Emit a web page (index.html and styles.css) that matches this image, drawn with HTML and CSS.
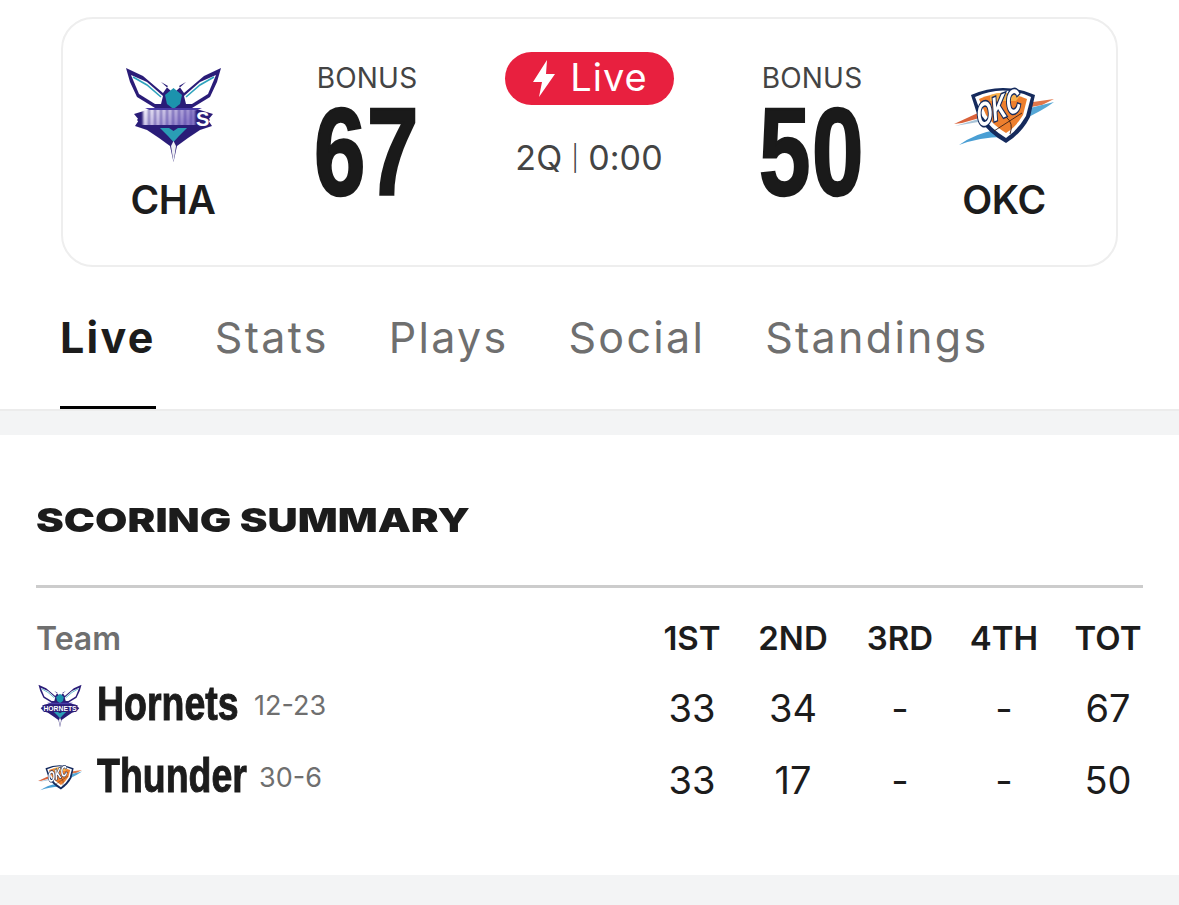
FILE: index.html
```html
<!DOCTYPE html>
<html lang="en">
<head>
<meta charset="utf-8">
<title>CHA vs OKC</title>
<link rel="stylesheet" href="styles.css">
</head>
<body>
<svg class="defs" width="0" height="0" aria-hidden="true">
  <defs>
    <filter id="soft"><feGaussianBlur stdDeviation="0.35"/></filter>
    <filter id="smear"><feGaussianBlur stdDeviation="1.1 0.7"/></filter>
    <linearGradient id="smear-fill" x1="0" y1="0" x2="1" y2="0.4">
      <stop offset="0" stop-color="#f4f1fb"/>
      <stop offset="1" stop-color="#8d7cc9"/>
    </linearGradient>
    <symbol id="hornets" viewBox="0 0 97 94">
      <g filter="url(#soft)">
        <path d="M48.5 94 L45 78 L34 70 L22 62 L10 58 L14 52 L9 46 L22 42 L30 40 L12 29 L5 14 L1 0 L18 8 L38 25 L43 18 L36 14 L46 23 L51 23 L61 14 L54 18 L59 25 L79 8 L96 0 L92 14 L85 29 L67 40 L75 42 L88 46 L83 52 L87 58 L75 62 L63 70 L52 78 Z" fill="#2b1d78"/>
        <path d="M6 7 L22 14 L38 28 L36 36 L30 36 L14 26 Z" fill="#fff"/>
        <path d="M91 7 L75 14 L59 28 L61 36 L67 36 L83 26 Z" fill="#fff"/>
        <path d="M8 9 L22 17 L36 29 M89 9 L75 17 L61 29" stroke="#2fa3bd" stroke-width="1.6" fill="none"/>
        <path d="M40 27 L48.5 20 L57 27 L55 36 L48.5 41 L42 36 Z" fill="#1e93ad"/>
        <path d="M35 60 L44 60 L48.5 63 L53 60 L62 60 L54 68 L48.5 74 L43 68 Z" fill="#2a9db5"/>
        <path d="M48.5 94 L46 78 L48.5 73 L51 78 Z" fill="#eef0f4"/>
        <path d="M20 40 L77 40 L70 43 L27 43 Z" fill="#4a3aa6"/>
      </g>
    </symbol>
    <symbol id="thunder" viewBox="0 0 100 60">
      <g filter="url(#soft)">
        <path d="M0 37 L26 25 L29 30 L8 36 Z" fill="#d9623a"/>
        <path d="M1 39 L28 31 L30 34 Z" fill="#a9c4d8"/>
        <path d="M5 58 Q22 46 42 43 L49 50 Q26 50 5 58 Z" fill="#4a9fd4"/>
        <path d="M72 16 L100 12 L88 18 L72 21 Z" fill="#e0764a"/>
        <path d="M72 22 L100 15 Q88 24 68 33 Z" fill="#56a7d6"/>
        <path d="M17 8 Q49 -6 81 8 L76 30 Q68 46 52 56 Q34 46 24 30 Z" fill="#12295c"/>
        <path d="M21 10 Q49 -3 77 10 L72 29 Q64 43 52 51 Q37 42 28 29 Z" fill="#fff"/>
        <path d="M25 12 Q49 1 73 12 L69 28 Q62 40 52 46 Q40 39 32 28 Z" fill="#ee7f2d"/>
        <path d="M36 8 Q50 3 66 9 L62 14 L36 14 Z" fill="#f6b04c"/>
        <path d="M40 44 L68 26 M52 30 Q60 36 56 47" stroke="#3a1f1a" stroke-width="0.9" fill="none"/>
        <text class="okc-text" transform="translate(25 41) rotate(-23) skewX(-12) scale(.66 1)">OKC</text>
      </g>
    </symbol>
  </defs>
</svg>

<main class="page">
  <section class="scoreboard">
    <div class="team">
      <div class="team-logo">
        <svg class="logo-hornets" viewBox="0 0 97 94">
          <use href="#hornets"/>
          <path class="band-base" d="M12 52 L18 44 L79 44 L85 52 L79 59 L18 59 Z"/>
          <g filter="url(#smear)">
            <rect class="smear-light" x="18" y="42" width="52" height="15"/>
            <path class="smear-dark" d="M24 42v15M30 42v15M36 42v15M42 42v15M48 42v15M54 42v15M60 42v15M66 42v15"/>
          </g>
          <text x="71" y="58" class="big-s">S</text>
        </svg>
      </div>
      <div class="team-abbr">CHA</div>
    </div>
    <div class="score-col">
      <div class="bonus">BONUS</div>
      <div class="score"><span>67</span></div>
    </div>
    <div class="status">
      <div class="live-pill">
        <svg class="bolt" viewBox="0 0 24 37"><path d="M15 0 L1 22 L10 22 L7 37 L23 14 L14 14 Z" fill="#fff"/></svg>
        <span>Live</span>
      </div>
      <div class="clock">2Q <span class="sep">|</span> 0:00</div>
    </div>
    <div class="score-col">
      <div class="bonus">BONUS</div>
      <div class="score"><span>50</span></div>
    </div>
    <div class="team">
      <div class="team-logo">
        <svg class="logo-thunder" viewBox="0 0 100 60"><use href="#thunder"/></svg>
      </div>
      <div class="team-abbr">OKC</div>
    </div>
  </section>

  <nav class="tabs">
    <a class="tab tab-active">Live</a>
    <a class="tab">Stats</a>
    <a class="tab">Plays</a>
    <a class="tab">Social</a>
    <a class="tab">Standings</a>
  </nav>
  <div class="band"></div>

  <section class="summary">
    <h2 class="summary-title"><span>SCORING SUMMARY</span></h2>
    <div class="row head">
      <div class="team-label">Team</div>
      <div class="num">1ST</div><div class="num">2ND</div><div class="num">3RD</div><div class="num">4TH</div><div class="num">TOT</div>
    </div>
    <div class="row team-row">
      <div class="cell-team">
        <svg class="mini-logo" viewBox="0 0 97 94"><use href="#hornets"/><path class="band-base" d="M6 52 L14 44 L83 44 L91 52 L83 60 L14 60 Z"/><text x="48.5" y="57" class="mini-text">HORNETS</text></svg>
        <span class="team-name name-hornets"><span>Hornets</span></span>
        <span class="record">12-23</span>
      </div>
      <div class="num">33</div><div class="num">34</div><div class="num">-</div><div class="num">-</div><div class="num">67</div>
    </div>
    <div class="row team-row">
      <div class="cell-team">
        <svg class="mini-logo" viewBox="0 0 100 60"><use href="#thunder"/></svg>
        <span class="team-name name-thunder"><span>Thunder</span></span>
        <span class="record">30-6</span>
      </div>
      <div class="num">33</div><div class="num">17</div><div class="num">-</div><div class="num">-</div><div class="num">50</div>
    </div>
  </section>
  <div class="footer-band"></div>
</main>
</body>
</html>
```
FILE: styles.css
```css
* { box-sizing: border-box; }
html, body { margin: 0; padding: 0; background: #fff; }
body { font-family: "Inter", "Liberation Sans", sans-serif; color: #1c1c1c; height: 905px; overflow: hidden; }
.defs { display: block; height: 0; }
.page { display: flex; flex-direction: column; height: 905px; }

.scoreboard {
  margin: 17px 61px 0;
  height: 250px;
  border: 2px solid #eeeeee;
  border-radius: 32px;
  display: grid;
  grid-template-columns: 220px 168px 276px 170px 214px;
}
.team { display: flex; flex-direction: column; align-items: center; padding-top: 49px; }
.team-logo { width: 100px; height: 94px; display: flex; justify-content: center; align-items: center; }
.logo-hornets { width: 97px; height: 94px; }
.logo-thunder { width: 100px; height: 60px; margin-top: 4px; }
.band-base { fill: #2b1d78; }
.smear-light { fill: url(#smear-fill); }
.smear-dark { stroke: #5a47ad; stroke-width: 2; fill: none; }
.big-s { font: 700 20px "Liberation Sans Narrow", "Liberation Sans", sans-serif; fill: #fff; }
.okc-text { font: italic 700 32px "Liberation Sans", sans-serif; fill: #fff; stroke: #12295c; stroke-width: 3px; paint-order: stroke; }
.team-abbr { font-size: 39px; line-height: 46px; font-weight: 600; margin-top: 15px; letter-spacing: -.4px; }

.score-col { display: flex; flex-direction: column; align-items: center; padding-top: 42px; }
.bonus { font-size: 28px; line-height: 34px; color: #444; letter-spacing: .2px; }
.score { font-family: "Liberation Sans Narrow", "Liberation Sans", sans-serif; font-weight: 700; color: #1a1a1a; font-size: 124px; line-height: 96px; margin-top: 9px; }
.score span { display: inline-block; transform: scaleX(.745); letter-spacing: 2px; -webkit-text-stroke: 2.5px #1a1a1a; }

.status { display: flex; flex-direction: column; align-items: center; padding-top: 33px; }
.live-pill { width: 169px; height: 53px; border-radius: 27px; background: #e8203f; color: #fff; display: flex; align-items: center; justify-content: center; gap: 14px; font-size: 38px; letter-spacing: 1px; padding: 0 0 3px 2px; }
.bolt { width: 24px; height: 37px; margin-top: 3px; }
.clock { margin-top: 31px; font-size: 34px; line-height: 44px; color: #444; letter-spacing: .1px; display: flex; align-items: center; gap: 9px; }
.sep { font-size: 25px; font-weight: 300; line-height: 44px; }

.tabs { height: 142px; padding: 0 60px; display: flex; gap: 60px; }
.tab { font-size: 43px; line-height: 50px; padding-top: 45px; color: #6f6f6f; letter-spacing: 2.3px; height: 142px; }
.tab-active { color: #1c1c1c; font-weight: 700; border-bottom: 3px solid #000; margin-right: -1px; }

.band { height: 26px; background: #f3f4f5; border-top: 2px solid #ececec; }

.summary { flex: 1; padding: 0 36px; }
.summary-title { margin: 65px 0 0; font-weight: 900; font-size: 33px; line-height: 40px; height: 88px; border-bottom: 3px solid #cccccc; }
.summary-title span { display: inline-block; transform: scaleX(1.267); transform-origin: left center; white-space: nowrap; }
.row { display: grid; grid-template-columns: 1fr 92px 110px 104px 104px 104px; align-items: center; text-align: center; margin-right: -17px; }
.head { height: 68px; margin-top: 16px; font-size: 33px; font-weight: 600; }
.team-label { color: #6f6f6f; text-align: left; font-size: 32px; }
.team-row { height: 72px; font-size: 38px; }
.cell-team { display: flex; align-items: center; margin-top: -5px; }
.mini-logo { width: 44px; height: 44px; margin: 0 15px 0 2px; }
.mini-text { font: 700 15px "Liberation Sans Narrow", "Liberation Sans", sans-serif; fill: #fff; text-anchor: middle; }
.team-name { font-family: "Liberation Sans Narrow", "Liberation Sans", sans-serif; font-weight: 700; font-size: 49px; line-height: 56px; margin-top: -6px; }
.name-hornets { width: 157px; }
.name-thunder { width: 162px; }
.team-name span { display: inline-block; transform: scaleX(.765); transform-origin: left center; white-space: nowrap; -webkit-text-stroke: 1px #1a1a1a; }
.record { font-size: 27px; color: #6f6f6f; }

.footer-band { height: 30px; background: #f3f4f5; }
```
